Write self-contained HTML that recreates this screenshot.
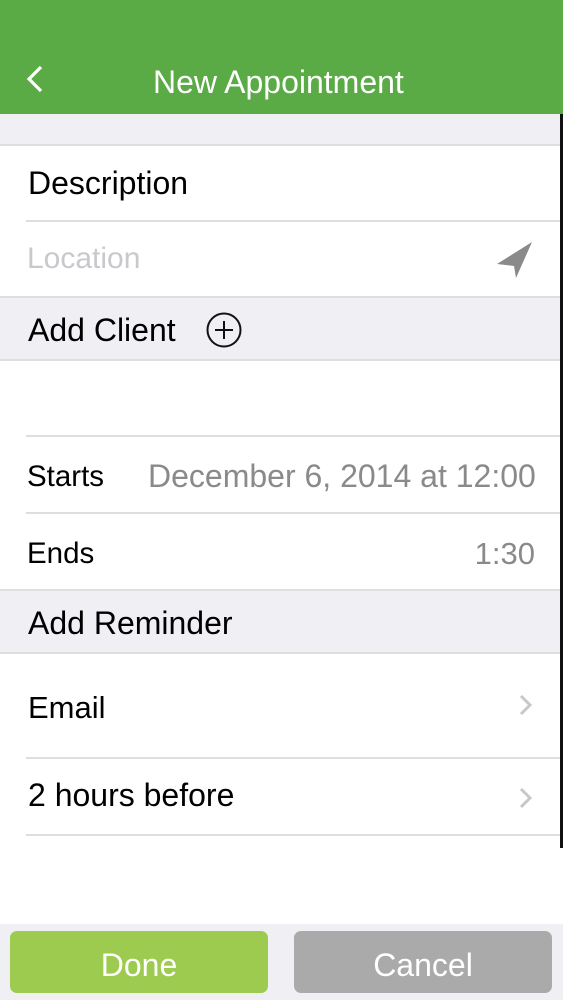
<!DOCTYPE html>
<html><head><style>
*{margin:0;padding:0;box-sizing:border-box}
body{width:563px;height:1000px;position:relative;overflow:hidden;background:#fff;font-family:"Liberation Sans",sans-serif;color:#000}
.a{position:absolute}
.hdr{left:0;top:0;width:563px;height:114px;background:#5aab46}
.gray{background:#efeff4;left:0;width:560px}
.ln{height:2px;background:#dededf}
.t{white-space:nowrap;line-height:1}
</style></head><body>
<div class="a hdr"></div>
<svg class="a" style="left:24px;top:64px" width="22" height="30"><path d="M17 3 L5 15 L17 27" stroke="#fff" stroke-width="3.2" fill="none"/></svg>
<div class="a t" style="left:153px;top:66px;color:#fff;font-size:32px">New Appointment</div>
<div class="a" style="left:560px;top:114px;width:3px;height:734px;background:#111"></div>

<div class="a gray" style="top:114px;height:31px"></div>
<div class="a ln" style="left:0;top:144px;width:560px"></div>
<div class="a t" style="left:28px;top:167px;font-size:32px">Description</div>
<div class="a ln" style="left:26px;top:220px;width:534px"></div>
<div class="a t" style="left:27px;top:244px;color:#c8c8cd;font-size:30px">Location</div>
<svg class="a" style="left:494px;top:240px" width="40" height="40"><path d="M3 24 L38 2 L22 38 L20 26 Z" fill="#8a8a8a"/></svg>
<div class="a gray" style="top:297px;height:63px"></div>
<div class="a ln" style="left:0;top:296px;width:560px"></div>
<div class="a ln" style="left:0;top:359px;width:560px"></div>
<div class="a t" style="left:28px;top:314px;font-size:32px">Add Client</div>
<svg class="a" style="left:205px;top:311px" width="40" height="40"><circle cx="19" cy="19" r="16.5" stroke="#111" stroke-width="2" fill="none"/><path d="M19 10V28M10 19H28" stroke="#111" stroke-width="2"/></svg>
<div class="a ln" style="left:26px;top:435px;width:534px"></div>
<div class="a t" style="left:27px;top:462px;font-size:29.5px">Starts</div>
<div class="a t" style="left:148px;top:460px;color:#8a8a8a;font-size:32px">December 6, 2014 at 12:00</div>
<div class="a ln" style="left:26px;top:512px;width:534px"></div>
<div class="a t" style="left:27px;top:539px;font-size:29.5px">Ends</div>
<div class="a t" style="right:28px;top:538px;color:#8a8a8a;font-size:31px">1:30</div>
<div class="a gray" style="top:590px;height:63px"></div>
<div class="a ln" style="left:0;top:589px;width:560px"></div>
<div class="a ln" style="left:0;top:652px;width:560px"></div>
<div class="a t" style="left:28px;top:607px;font-size:32px">Add Reminder</div>
<div class="a t" style="left:28px;top:692px;font-size:31px">Email</div>
<svg class="a" style="left:516px;top:692px" width="20" height="28"><path d="M5 4L14 13L5 22" stroke="#c7c7cc" stroke-width="3" fill="none"/></svg>
<div class="a ln" style="left:26px;top:757px;width:534px"></div>
<div class="a t" style="left:28px;top:779px;font-size:32px">2 hours before</div>
<svg class="a" style="left:516px;top:785px" width="20" height="28"><path d="M5 4L14 13L5 22" stroke="#c7c7cc" stroke-width="3" fill="none"/></svg>
<div class="a ln" style="left:26px;top:834px;width:534px"></div>

<div class="a" style="left:0;top:924px;width:563px;height:76px;background:#efeff4"></div>
<div class="a" style="left:10px;top:931px;width:258px;height:62px;background:#9dcb4f;border-radius:7px;color:#fff;font-size:32px;text-align:center;line-height:68px">Done</div>
<div class="a" style="left:294px;top:931px;width:258px;height:62px;background:#aaaaaa;border-radius:7px;color:#fff;font-size:32px;text-align:center;line-height:68px">Cancel</div>
</body></html>
